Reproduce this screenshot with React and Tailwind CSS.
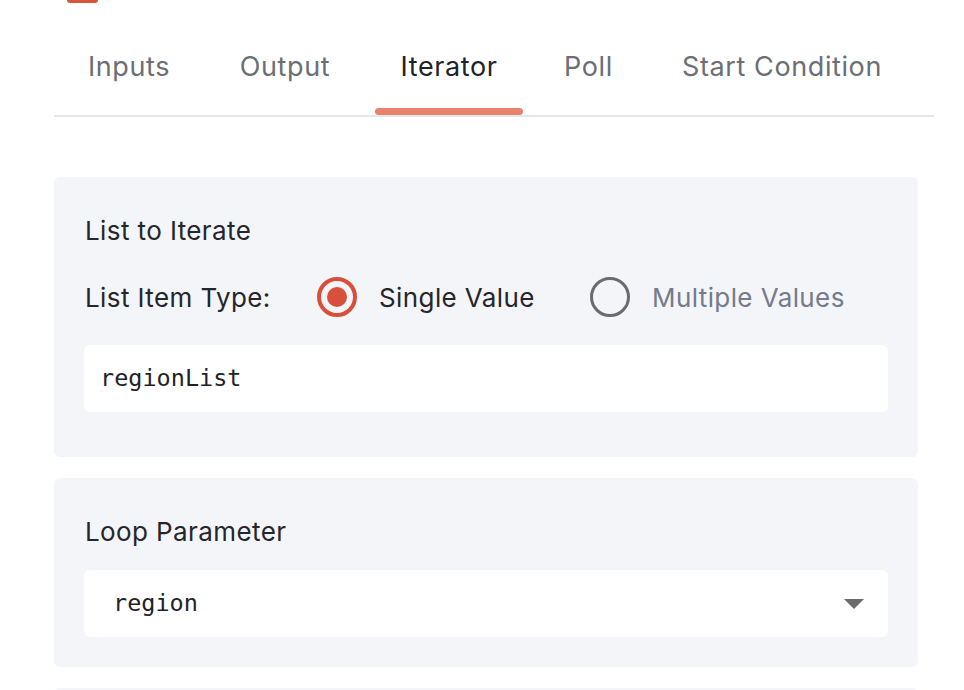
import React, { useState } from 'react';

const tabs = [
    { name: 'Inputs', width: 'w-[132px]' },
    { name: 'Output', width: 'w-[144px]' },
    { name: 'Iterator', width: 'w-[148px]' },
    { name: 'Poll', width: 'w-[95px]' },
    { name: 'Start Condition', width: 'w-[256px]' },
];

const Radio = ({ checked, label, onClick, className }) => (
    <button type="button" onClick={onClick} className={`flex items-center gap-[22px] ${className || ''}`}>
        {checked ? (
            <span className="w-[40px] h-[40px] shrink-0 rounded-full border-[4px] border-[#d9503a] flex items-center justify-center">
                <span className="w-[20px] h-[20px] rounded-full bg-[#d9503a]"></span>
            </span>
        ) : (
            <span className="w-[40px] h-[40px] shrink-0 rounded-full border-[3px] border-[#6b6b6d]"></span>
        )}
        <span className={checked ? 'text-[#24262b]' : 'text-[#737b8c]'}>{label}</span>
    </button>
);

const App = () => {
    const [active, setActive] = useState('Iterator');
    const [itemType, setItemType] = useState('single');

    return (
        <div
            className="w-[964px] h-[690px] overflow-hidden bg-white text-[#24262b]"
            style={{ fontFamily: 'Inter, "Noto Sans", sans-serif' }}
        >
            {/* bottom edge of the button above */}
            <div className="ml-[67px] w-[31px] h-[3px] rounded-b-[3px] bg-[#d9553b]"></div>

            {/* tabs */}
            <div className="ml-[54px] w-[880px] mt-[46px] border-b-2 border-[#e4e6eb] flex px-[9px] gap-[18px]">
                {tabs.map((tab) => (
                    <button
                        key={tab.name}
                        type="button"
                        onClick={() => setActive(tab.name)}
                        className={`flex flex-col items-stretch ${tab.width}`}
                    >
                        <span
                            className={`text-center whitespace-nowrap text-[27px] leading-[36px] tracking-[0.6px] ${
                                active === tab.name ? 'text-[#1f2328]' : 'text-[#6b6e74]'
                            }`}
                        >
                            {tab.name}
                        </span>
                        <span
                            className={`mt-[23px] h-[7px] rounded-full ${
                                active === tab.name ? 'bg-[#e8826c]' : 'bg-transparent'
                            }`}
                        ></span>
                    </button>
                ))}
            </div>

            {/* list to iterate */}
            <div className="ml-[54px] w-[864px] mt-[60px] rounded-[6px] bg-[#f4f5f9] pt-[38px] px-[30px] pb-[45px] tracking-[0.4px]">
                <div className="text-[26px] leading-[32px] pl-px">List to Iterate</div>
                <div className="mt-[30px] flex items-center text-[26px] h-[40px] pl-px">
                    <span className="w-[232px]">List Item Type:</span>
                    <Radio
                        className="w-[273px]"
                        checked={itemType === 'single'}
                        label="Single Value"
                        onClick={() => setItemType('single')}
                    />
                    <Radio
                        checked={itemType === 'multiple'}
                        label="Multiple Values"
                        onClick={() => setItemType('multiple')}
                    />
                </div>
                <div
                    className="mt-[28px] h-[67px] rounded-[6px] bg-white flex items-center px-4 text-[23.5px] tracking-normal text-[#1f2328]"
                    style={{ fontFamily: '"DejaVu Sans Mono", "Liberation Mono", monospace' }}
                >
                    regionList
                </div>
            </div>

            {/* loop parameter */}
            <div className="ml-[54px] w-[864px] mt-[21px] rounded-[6px] bg-[#f4f5f9] pt-[38px] px-[30px] pb-[30px] tracking-[0.4px]">
                <div className="text-[26px] leading-[32px] pl-px">Loop Parameter</div>
                <div className="mt-[22px] h-[67px] rounded-[6px] bg-white flex items-center justify-between pl-[29px] pr-[24px]">
                    <span
                        className="text-[23.5px] tracking-normal text-[#1f2328]"
                        style={{ fontFamily: '"DejaVu Sans Mono", "Liberation Mono", monospace' }}
                    >
                        region
                    </span>
                    <svg width="20" height="10" viewBox="0 0 20 10">
                        <path d="M0 0 L20 0 L10 10 Z" fill="#6b6b6d" />
                    </svg>
                </div>
            </div>

            <div className="ml-[54px] w-[864px] mt-[21px] h-[40px] rounded-[6px] bg-[#f4f5f9]"></div>
        </div>
    );
};

export default App;
